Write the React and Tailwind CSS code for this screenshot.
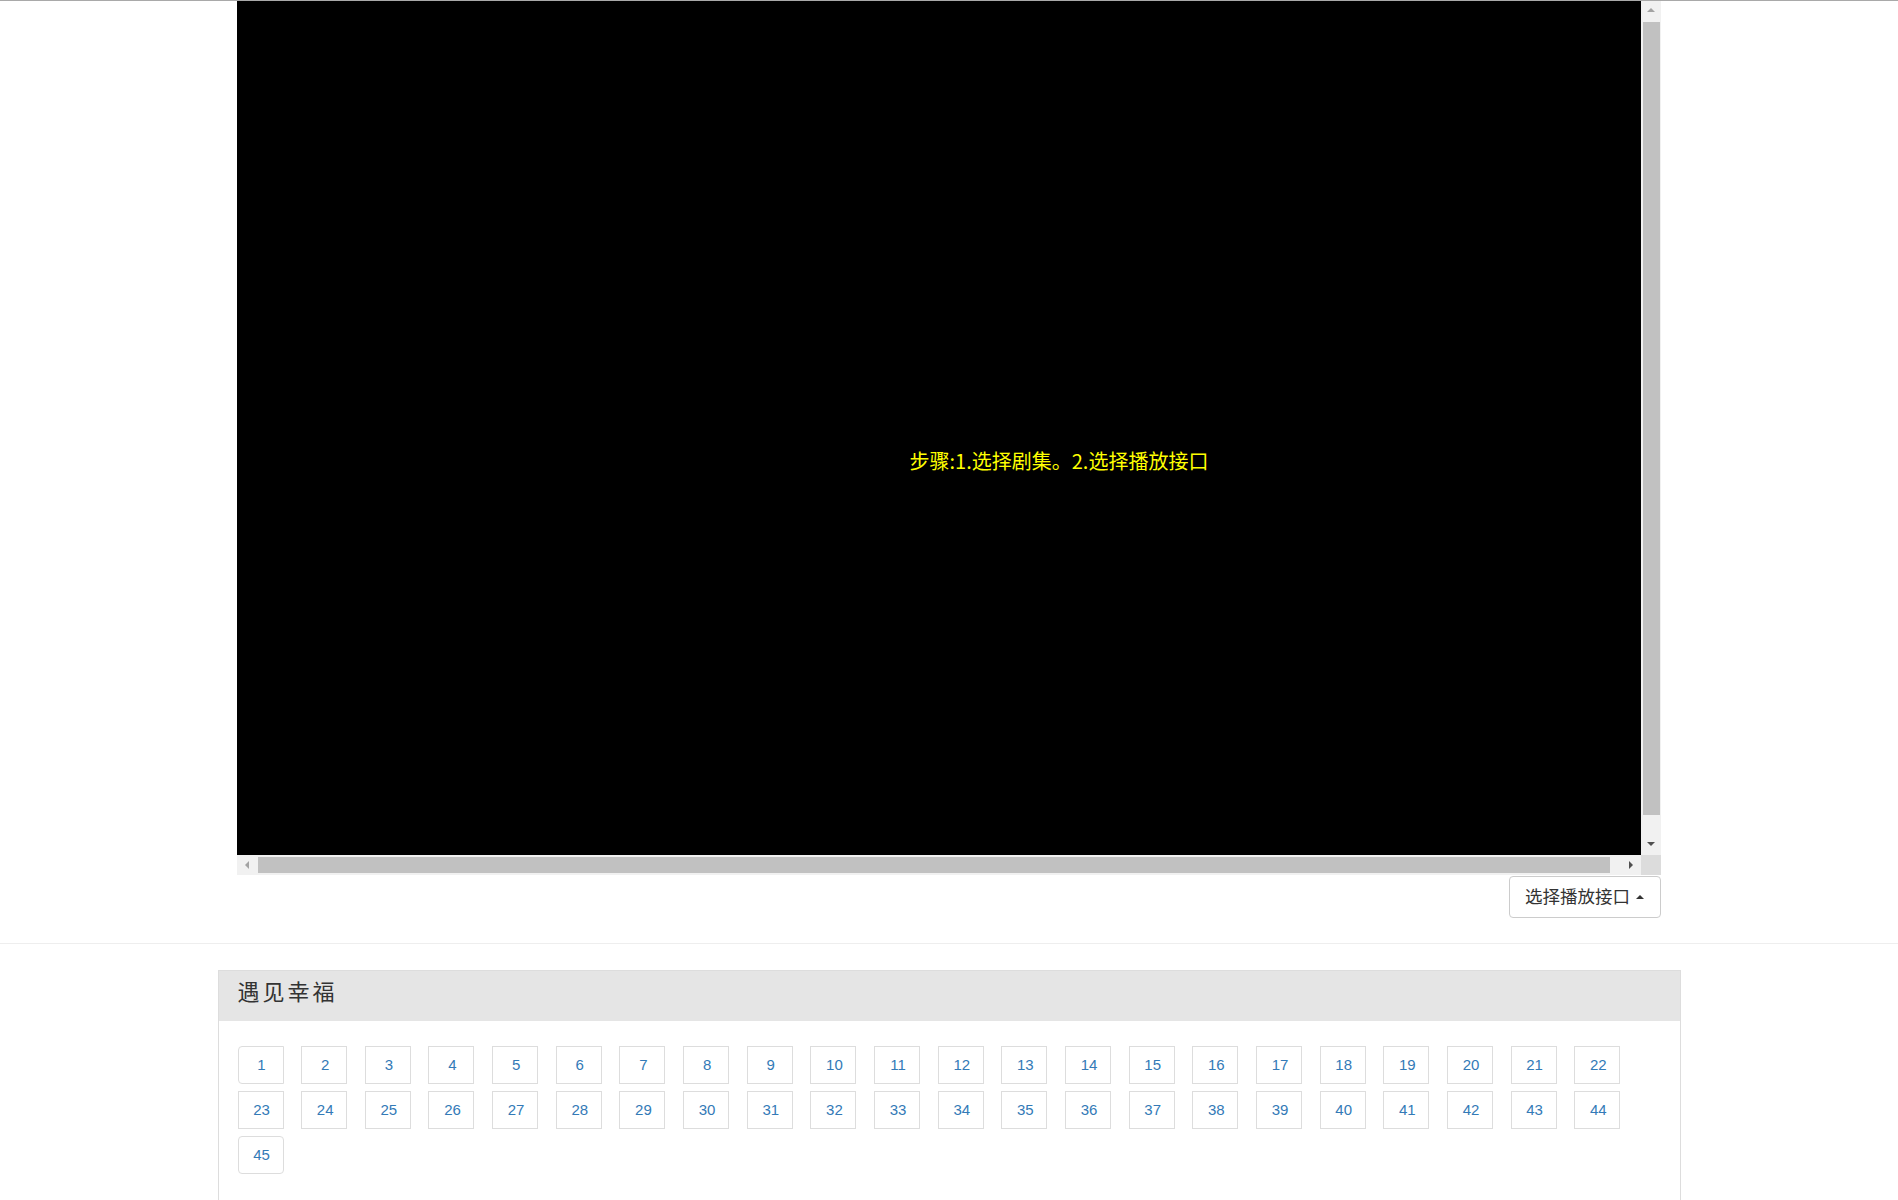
import React from "react";

const episodes = Array.from({ length: 45 }, (_, i) => i + 1);

function Arrow({ dir, color }) {
  if (dir === "up")
    return <div className="w-0 h-0 border-l-[4px] border-r-[4px] border-b-[4px] border-l-transparent border-r-transparent" style={{ borderBottomColor: color }} />;
  if (dir === "down")
    return <div className="w-0 h-0 border-l-[4px] border-r-[4px] border-t-[4px] border-l-transparent border-r-transparent" style={{ borderTopColor: color }} />;
  if (dir === "left")
    return <div className="w-0 h-0 border-t-[4px] border-b-[4px] border-r-[4px] border-t-transparent border-b-transparent" style={{ borderRightColor: color }} />;
  return <div className="w-0 h-0 border-t-[4px] border-b-[4px] border-l-[4px] border-t-transparent border-b-transparent" style={{ borderLeftColor: color }} />;
}

export default function App() {
  return (
    <div className="h-[1200px] overflow-hidden bg-white flex flex-col" style={{ fontFamily: '"Liberation Sans", "Noto Sans CJK SC", sans-serif' }}>
      <div className="h-px bg-[#a9a9a9] shrink-0" />

      {/* video frame */}
      <div className="w-[1424px] mx-auto shrink-0 flex flex-col">
        <div className="flex h-[854px]">
          <div className="flex-1 bg-black overflow-hidden">
            <div className="w-[1644px] h-[920px] flex items-center justify-center">
              <span className="text-[20px] text-[#ffff00] leading-none" style={{ fontFamily: '"Noto Sans CJK SC", sans-serif' }}>
                步骤:1.选择剧集。2.选择播放接口
              </span>
            </div>
          </div>
          <div className="w-[20px] bg-[#f1f1f1] flex flex-col">
            <div className="h-[20px] flex items-center justify-center pb-[2px]">
              <Arrow dir="up" color="#a3a3a3" />
            </div>
            <div className="h-[793px] mt-[1px] ml-[2px] mr-[1px] bg-[#c1c1c1]" />
            <div className="flex-1" />
            <div className="h-[20px] flex items-center justify-center pb-[2px]">
              <Arrow dir="down" color="#505050" />
            </div>
          </div>
        </div>
        <div className="flex h-[20px]">
          <div className="flex-1 bg-[#f1f1f1] flex items-center">
            <div className="w-[20px] flex items-center justify-center">
              <Arrow dir="left" color="#a3a3a3" />
            </div>
            <div className="w-[1352px] h-[16px] ml-[1px] bg-[#c1c1c1]" />
            <div className="flex-1" />
            <div className="w-[20px] flex items-center justify-center">
              <Arrow dir="right" color="#505050" />
            </div>
          </div>
          <div className="w-[20px] bg-[#dcdcdc]" />
        </div>
        <div className="flex justify-end mt-px">
          <button className="h-[42px] pl-[15px] pr-[16px] border border-[#cccccc] rounded-[4px] bg-white text-[#333] text-[17.5px] flex items-center gap-[6px]" style={{ fontFamily: '"Noto Sans CJK SC", sans-serif' }}>
            <span className="leading-none pb-[2px]">选择播放接口</span>
            <span className="w-0 h-0 border-l-[4px] border-r-[4px] border-b-[4px] border-l-transparent border-r-transparent border-b-[#333]" />
          </button>
        </div>
      </div>

      <div className="h-px bg-[#eeeeee] mt-[25px] shrink-0" />

      {/* panel */}
      <div className="w-[1463px] mx-auto mt-[26px] flex-1 border-x border-t border-[#dddddd] flex flex-col">
        <div className="h-[50px] bg-[#e5e5e5] flex items-center pl-[19px] pb-[12px]">
          <h3 className="text-[22px] leading-none tracking-[3px] text-[#333] font-normal" style={{ fontFamily: '"Noto Sans CJK SC", serif' }}>
            遇见幸福
          </h3>
        </div>
        <div className="pt-[25px] pl-[19px] pr-[19px] flex flex-wrap gap-x-[17.67px] gap-y-[7px]">
          {episodes.map((n) => (
            <a
              key={n}
              className={
                "w-[46px] h-[38px] border border-[#dddddd] flex items-center justify-center pl-[2px] text-[15px] text-[#337ab7] " +
                (n === 1 ? "rounded-l-[4px]" : n === 45 ? "rounded-[4px]" : "")
              }
            >
              {n}
            </a>
          ))}
        </div>
      </div>
    </div>
  );
}
